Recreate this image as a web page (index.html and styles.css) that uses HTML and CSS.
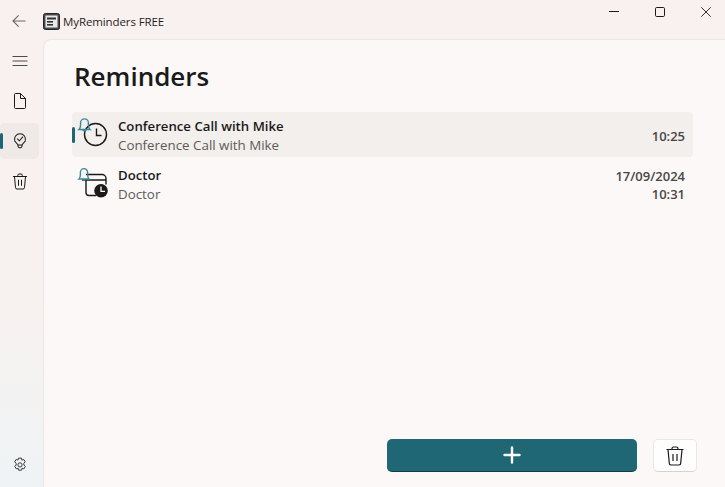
FILE: index.html
```html
<!DOCTYPE html>
<html lang="en">
<head>
<meta charset="utf-8">
<title>MyReminders FREE</title>
<link rel="stylesheet" href="styles.css">
</head>
<body>
<div class="window">
  <header class="titlebar">
    <div class="back">
      <svg width="16" height="16" viewBox="0 0 16 16" fill="none" stroke="#6b6867" stroke-width="1.1"><path d="M14.500 8H2M7.600 2.400 2 8l5.600 5.600"/></svg>
    </div>
    <svg class="applogo" width="17" height="17" viewBox="0 0 17 17"><rect x=".5" y=".5" width="16" height="16" rx="2" fill="#4a4a4a" stroke="#222"/><rect x="2.500" y="2.500" width="12" height="12" fill="#e8e8e8"/><rect x="4" y="4.500" width="9" height="2" fill="#333"/><rect x="4" y="8" width="6" height="1.600" fill="#333"/><rect x="4" y="11" width="6" height="1.600" fill="#333"/></svg>
    <span class="apptitle">MyReminders FREE</span>
    <div class="wincontrols">
      <span class="winbtn"><svg width="10" height="10" viewBox="0 0 10 10"><path d="M0 4.500h10" stroke="#1a1a1a" stroke-width="1"/></svg></span>
      <span class="winbtn"><svg width="10" height="10" viewBox="0 0 10 10" fill="none"><rect x=".5" y=".5" width="9" height="9" rx="1.200" stroke="#1a1a1a"/></svg></span>
      <span class="winbtn"><svg width="10" height="10" viewBox="0 0 10 10" fill="none"><path d="M.3.3l9.400 9.400M9.700.3.3 9.700" stroke="#1a1a1a" stroke-width=".9"/></svg></span>
    </div>
  </header>
  <div class="body">
    <nav class="nav">
      <div class="navitem">
        <svg width="16" height="16" viewBox="0 0 16 16" fill="none" stroke="#3a3a3a"><path d="M.5 3.500h15M.5 8h15M.5 12.500h15" stroke-width=".9"/></svg>
      </div>
      <div class="navitem">
        <svg width="16" height="16" viewBox="0 0 16 16" fill="none" stroke="#1a1a1a" stroke-width="1"><path d="M3.500.5a1 1 0 0 0-1 1v13a1 1 0 0 0 1 1h9a1 1 0 0 0 1-1V5.500l-5-5zM8.500.5v5h5"/></svg>
      </div>
      <div class="navitem navitem-active">
        <span class="navmark"></span>
        <svg width="14" height="16" viewBox="0 0 16 18" fill="none" stroke="#1a1a1a" stroke-width="1.150"><path d="M5.500 13.500C5.200 12 3 10.500 2 9a6.300 6.300 0 1 1 12 0c-1 1.500-3.200 3-3.500 4.500zM5.500 13.500l.4 2a1.500 1.500 0 0 0 1.500 1.200h1.200a1.500 1.500 0 0 0 1.500-1.200l.4-2"/><path d="M4.800 6.200 7.300 8.700l4.200-4.700"/></svg>
      </div>
      <div class="navitem">
        <svg width="16" height="17" viewBox="0 0 16 17" fill="none" stroke="#1a1a1a" stroke-width="1"><path d="M1 3.500h14M5.800 3.500V2.300A1.300 1.300 0 0 1 7 1h2a1.300 1.300 0 0 1 1.300 1.300v1.200M2.500 3.500l1 11.200a1.500 1.500 0 0 0 1.500 1.300h6a1.500 1.500 0 0 0 1.500-1.300l1-11.200M6.500 6.800v6M9.500 6.800v6"/></svg>
      </div>
      <div class="navitem navitem-bottom">
        <svg width="16" height="16" viewBox="0 0 16 16" fill="none" stroke="#3a3a3a" stroke-width="1"><path d="M6.600 1.100h2.800l.5 2 1.800-.7 1.500 2.400-1.400 1.500.1 1.700 1.400 1.500-1.500 2.400-1.800-.7-.5 2H6.600l-.5-2-1.800.7-1.500-2.400 1.400-1.500-.1-1.700-1.400-1.500 1.500-2.400 1.800.7z"/><circle cx="8" cy="7.900" r="2.100"/></svg>
      </div>
    </nav>
    <main class="content">
      <h1 class="heading">Reminders</h1>
      <ul class="list">
        <li class="row row-selected">
          <span class="rowmark"></span>
          <svg class="rowicon" width="36" height="36" viewBox="0 0 36 36" fill="none">
            <circle cx="21.500" cy="18.500" r="11" stroke="#1a1a1a" stroke-width="1.400"/>
            <path d="M22.500 12.500v7h5" stroke="#1a1a1a" stroke-width="1.400"/>
            <path d="M5 13.500c1.200-1 1.600-2 1.600-4.800V6.800a3.900 3.900 0 0 1 7.800 0v1.900c0 2.800.4 3.800 1.600 4.800zM8.600 13.500a2 2 0 0 0 3.800 0" stroke="#3f8797" stroke-width="1.400" fill="none"/>
          </svg>
          <div class="rowtext">
            <div class="rowtitle">Conference Call with Mike</div>
            <div class="rowsub">Conference Call with Mike</div>
          </div>
          <div class="rowtime"><div>10:25</div></div>
        </li>
        <li class="row">
          <svg class="rowicon" width="36" height="36" viewBox="0 0 36 36" fill="none">
            <path d="M12 15V27.500a3 3 0 0 0 3 3H22M12 9.500H28a4 4 0 0 1 4 4v6M8 15H32" stroke="#1a1a1a" stroke-width="1.400"/>
            <circle cx="27" cy="25.800" r="6.800" fill="#1a1a1a"/>
            <path d="M27 21.500V26.300H31" stroke="#fff" stroke-width="1.300"/>
            <path d="M5 14c1.100-1 1.400-2 1.400-4.800V7.200a3.600 3.600 0 0 1 7.200 0v2c0 2.800.3 3.800 1.400 4.800zM8.400 14a1.800 1.800 0 0 0 3.400 0" stroke="#3f8797" stroke-width="1.400" fill="none"/>
          </svg>
          <div class="rowtext">
            <div class="rowtitle">Doctor</div>
            <div class="rowsub">Doctor</div>
          </div>
          <div class="rowtime"><div>17/09/2024</div><div>10:31</div></div>
        </li>
      </ul>
      <div class="actions">
        <button class="addbtn" type="button" aria-label="Add">
          <svg width="18" height="18" viewBox="0 0 18 18" fill="none" stroke="#fff" stroke-width="2.400" stroke-linecap="round"><path d="M9 1.500v15M1.500 9h15"/></svg>
        </button>
        <button class="delbtn" type="button" aria-label="Delete">
          <svg width="18" height="20" viewBox="0 0 18 20" fill="none" stroke="#1a1a1a" stroke-width="1.200"><path d="M.5 3.500h17M6 3.500V2.500A1.500 1.500 0 0 1 7.500 1h3A1.500 1.500 0 0 1 12 2.500v1M2 3.500l1.300 13.700A1.800 1.800 0 0 0 5 19h8a1.800 1.800 0 0 0 1.700-1.800L16 3.500M7 8v7M11 8v7"/></svg>
        </button>
      </div>
    </main>
  </div>
</div>
</body>
</html>
```
FILE: styles.css
```css
* { box-sizing: border-box; }
html, body { margin: 0; height: 100%; }
body {
  font-family: "Open Sans", "Noto Sans", sans-serif;
  color: #1a1a1a;
  overflow: hidden;
}
.window {
  width: 725px;
  height: 487px;
  display: flex;
  flex-direction: column;
  background: linear-gradient(180deg, #f8f1ef 0%, #f7f1ef 60%, #eff3f5 100%);
}
.titlebar {
  height: 39px;
  flex: none;
  display: flex;
  align-items: center;
  padding-top: 3px;
}
.back {
  width: 38px;
  height: 24px;
  display: flex;
  align-items: center;
  justify-content: center;
}
.applogo { margin-left: 5px; }
.apptitle {
  margin-left: 3px;
  font-size: 11.5px;
  letter-spacing: -0.1px;
  color: #1f1f1f;
}
.wincontrols {
  margin: -3px -4px 0 auto;
  align-self: flex-start;
  display: flex;
}
.winbtn {
  width: 46px;
  height: 24px;
  display: flex;
  align-items: center;
  justify-content: center;
}
.body {
  flex: 1;
  display: flex;
  min-height: 0;
}
.nav {
  width: 43px;
  flex: none;
  padding: 4px 4px 4px 0;
  display: flex;
  flex-direction: column;
}
.navitem {
  position: relative;
  width: 39px;
  height: 36px;
  margin-bottom: 4px;
  display: flex;
  align-items: center;
  justify-content: center;
  border-radius: 5px;
}
.navitem-active { background: #efeae8; }
.navitem-bottom { margin-top: auto; margin-bottom: 0; }
.navmark {
  position: absolute;
  left: 0;
  top: 10px;
  width: 3px;
  height: 16px;
  border-radius: 2px;
  background: #1e6675;
}
.content {
  flex: 1;
  min-width: 0;
  display: flex;
  flex-direction: column;
  background: #fbf8f7;
  border-left: 1px solid #ece6e5;
  border-top: 1px solid #ece6e5;
  border-top-left-radius: 8px;
  padding: 0 28px 15px 28px;
}
.heading {
  margin: 17px 0 17px 2px;
  font-size: 26px;
  font-weight: 600;
  line-height: 38px;
  color: #1a1a1a;
}
.list {
  list-style: none;
  margin: 0 4px 0 0;
  padding: 0;
  flex: 1;
  display: flex;
  flex-direction: column;
  gap: 4px;
}
.row {
  position: relative;
  height: 45px;
  display: flex;
  align-items: center;
  padding: 2px 8px 0 2px;
  border-radius: 4px;
}
.row-selected { background: #f2efed; }
.rowmark {
  position: absolute;
  left: 0;
  top: 15px;
  width: 3px;
  height: 16px;
  border-radius: 2px;
  background: #1e6675;
}
.rowicon { flex: none; margin-top: -4px; }
.rowtext {
  margin-left: 8px;
  flex: 1;
  min-width: 0;
}
.rowtitle {
  font-size: 13.2px;
  font-weight: 600;
  line-height: 19px;
}
.rowsub {
  font-size: 13.35px;
  line-height: 19px;
  color: #5d5b5a;
}
.rowtime {
  text-align: right;
  font-size: 13px;
  font-weight: 600;
  line-height: 18px;
  color: #484645;
}
.actions {
  display: flex;
  justify-content: flex-end;
  gap: 16px;
}
.addbtn {
  width: 250px;
  height: 33px;
  border: none;
  border-bottom: 1px solid #0f3f49;
  border-radius: 5px;
  background: #1f6775;
  display: flex;
  align-items: center;
  justify-content: center;
  padding: 0;
}
.delbtn {
  width: 44px;
  height: 33px;
  border: 1px solid #e9e6e4;
  border-bottom-color: #d5d2d0;
  border-radius: 5px;
  background: #fefefe;
  display: flex;
  align-items: center;
  justify-content: center;
  padding: 0;
}
```
